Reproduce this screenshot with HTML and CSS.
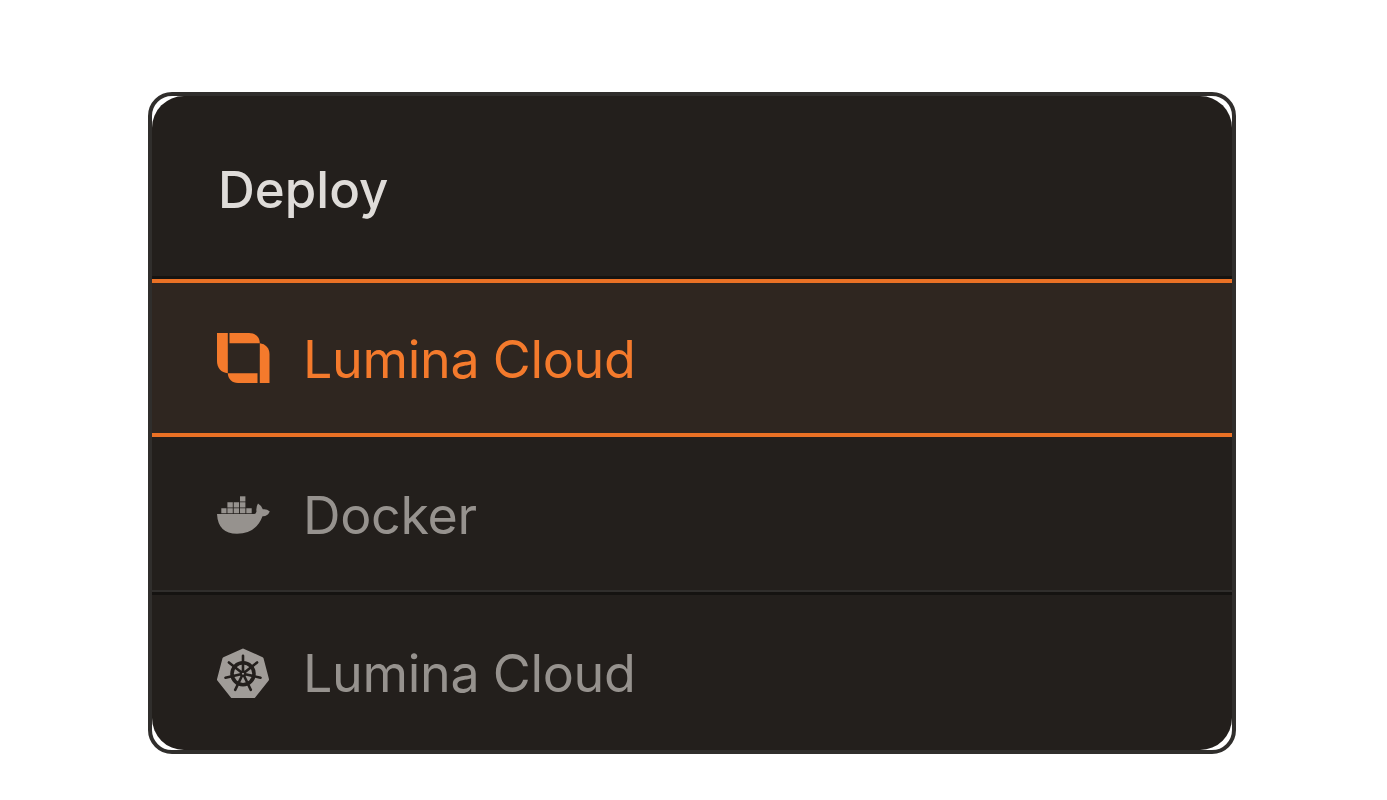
FILE: index.html
```html
<!DOCTYPE html>
<html lang="en">
<head>
  <meta charset="UTF-8">
  <meta name="viewport" content="width=device-width, initial-scale=1.0">
  <title>Deploy</title>
  <link rel="stylesheet" href="styles.css">
</head>
<body>

  <div class="frame">
    <div class="panel">
      <h1 class="title">Deploy</h1>

      <div class="option active">
        <svg class="icon" viewBox="0 0 52 50">
          <path d="M0 0H10.800V40.300C4 39.500 0 35 0 28Z"/>
          <path d="M12.500 0H32C38.500 0 42.800 4 42.800 10.300H12.500Z"/>
          <path d="M42.800 10.300C48.500 10.800 52.500 15.500 52.500 21V50H42.800Z"/>
          <path d="M10.800 40.300H40.500V50H21C15 50 11 46 10.800 40.300Z"/>
        </svg>
        <span class="label">Lumina Cloud</span>
      </div>

      <div class="option">
        <svg class="icon" viewBox="0 0 52 50">
          <path d="M0 24H37Q39 24 39.500 21.500Q38.800 17 41 13.500Q44.500 15.500 45.800 19.300Q49.500 18.500 52.800 21.500Q50.500 26.500 45.500 26.200Q39 43.700 20 43.700Q1 43.700 0 24Z"/>
          <path d="M4.300 18.300H9.500V23.300H4.300ZM10.400 18.300H15.800V23.300H10.400ZM16.700 18.300H22.100V23.300H16.700ZM23 18.300H28.400V23.300H23ZM29.300 18.300H34.700V23.300H29.300Z"/>
          <path d="M10.400 12.300H15.800V17.500H10.400ZM16.700 12.300H22.100V17.500H16.700ZM23 12.300H28.400V17.500H23Z"/>
          <path d="M23 6.300H28.400V11.500H23Z"/>
        </svg>
        <span class="label">Docker</span>
      </div>

      <div class="option">
        <svg class="icon" viewBox="0 0 52 50">
          <path class="hept" d="M26 2L45 10.500L50.500 31.500L37 48.500H15L1.500 31.500L7 10.500Z"/>
          <g class="wheel">
            <circle cx="26" cy="25.700" r="11"/>
            <circle class="hub" cx="26" cy="25.700" r="2.200"/>
            <path d="M26 23.500V7.700M27.700 24.300L40.100 14.500M28.200 26.200L43.500 29.700M27 27.700L33.800 41.900M25 27.700L18.200 41.900M23.800 26.200L8.500 29.700M24.300 24.300L11.900 14.500"/>
          </g>
        </svg>
        <span class="label">Lumina Cloud</span>
      </div>
    </div>
  </div>

</body>
</html>
```

FILE: styles.css
```css
body {
  margin: 0;
  background: white;
  font-family: Inter, "Liberation Sans", sans-serif;
  padding: 92px 151px 46px 148px;
}
.frame {
  border: 4px solid #302e2c;
  border-radius: 24px;
  background: white;
}
.panel {
  background: #231f1c;
  border-radius: 32px;
  overflow: hidden;
}
.title {
  margin: 0;
  height: 183px;
  box-sizing: border-box;
  padding: 64px 0 0 66px;
  font-size: 51px;
  line-height: 60px;
  font-weight: 500;
  letter-spacing: 0;
  color: #dfdcd9;
  border-bottom: 3px solid #151311;
}
.option {
  display: flex;
  align-items: center;
  gap: 34px;
  height: 155px;
  padding-left: 65px;
  font-size: 52px;
  font-weight: 400;
  letter-spacing: -0.3px;
  word-spacing: -1px;
  color: #96928e;
  border-bottom: 3px solid #151311;
  box-shadow: inset 0 -2px 0 #302e2c;
}
.option:last-child {
  border-bottom: none;
  box-shadow: none;
}
.option.active {
  height: 150px;
  color: #f47a2c;
  background: #2f2620;
  border-top: 4px solid #ea7125;
  border-bottom: 4px solid #ea7125;
  box-shadow: none;
}
.label {
  position: relative;
  top: 1px;
}
.icon {
  width: 52px;
  height: 50px;
  fill: currentColor;
  flex-shrink: 0;
  overflow: visible;
}
.hept {
  fill: #a09c98;
  stroke: #a09c98;
  stroke-width: 3;
  stroke-linejoin: round;
}
.wheel {
  fill: none;
  stroke: #231f1c;
  stroke-width: 3.6;
}
.wheel path {
  stroke-width: 2.6;
  stroke-linecap: round;
}
.wheel .hub {
  stroke-width: 1.8;
}
```
